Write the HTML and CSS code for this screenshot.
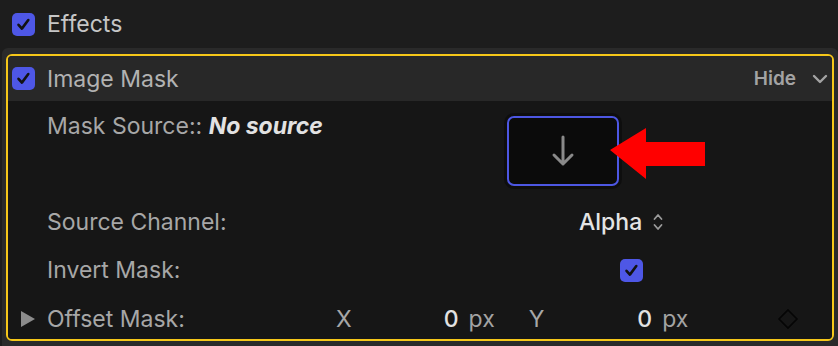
FILE: index.html
```html
<!DOCTYPE html>
<html lang="en">
<head>
  <meta charset="UTF-8" />
  <title>Effects - Image Mask</title>
  <link rel="stylesheet" href="styles.css">
</head>
<body>
  <div class="effects-row">
    <span class="check">
      <svg viewBox="0 0 23 23" width="23" height="23"><path d="M6.5 11.8l3.4 3.8 6.4-8.6" fill="none" stroke="#121212" stroke-width="2.6" stroke-linecap="round" stroke-linejoin="round"/></svg>
    </span>
    <span class="effects-title">Effects</span>
  </div>

  <div class="frame">
    <div class="mask">
      <div class="mask-head">
        <span class="check">
          <svg viewBox="0 0 23 23" width="23" height="23"><path d="M6.5 11.8l3.4 3.8 6.4-8.6" fill="none" stroke="#121212" stroke-width="2.6" stroke-linecap="round" stroke-linejoin="round"/></svg>
        </span>
        <span class="head-title">Image Mask</span>
        <span class="hide">Hide</span>
        <svg class="chevron" viewBox="0 0 16 10" width="16" height="10"><path d="M2 2l6 6 6-6" fill="none" stroke="#a3a3a3" stroke-width="2.4" stroke-linecap="round" stroke-linejoin="round"/></svg>
      </div>

      <div class="mask-body">
        <div class="row row-source">
          <span class="label">Mask Source:: <em class="none">No source</em></span>
          <div class="well">
            <svg viewBox="0 0 28 34" width="28" height="34"><path d="M14 3v27M5 21l9 9 9-9" fill="none" stroke="#8a8a8a" stroke-width="3" stroke-linecap="round" stroke-linejoin="round"/></svg>
          </div>
          <svg class="pointer" viewBox="0 0 96 52" width="96" height="52"><polygon points="0,22 36,0 36,14 95,14 95,38 36,38 36,51" fill="#ff0000"/></svg>
        </div>

        <div class="row">
          <span class="label">Source Channel:</span>
          <span class="popup">Alpha
            <svg viewBox="0 0 12 20" width="12" height="20"><path d="M2.5 7l3.5-4 3.5 4M2.5 13l3.5 4 3.5-4" fill="none" stroke="#9a9a9a" stroke-width="1.8" stroke-linecap="round" stroke-linejoin="round"/></svg>
          </span>
        </div>

        <div class="row">
          <span class="label">Invert Mask:</span>
          <span class="check check-invert">
            <svg viewBox="0 0 23 23" width="23" height="23"><path d="M6.5 11.8l3.4 3.8 6.4-8.6" fill="none" stroke="#121212" stroke-width="2.6" stroke-linecap="round" stroke-linejoin="round"/></svg>
          </span>
        </div>

        <div class="row row-offset">
          <svg class="disclose" viewBox="0 0 16 18" width="16" height="18"><polygon points="1,1 15,9 1,17" fill="#8c8c8c"/></svg>
          <span class="label">Offset Mask:</span>
          <span class="axis axis-x">X</span>
          <span class="num num-x">0</span>
          <span class="unit">px</span>
          <span class="axis axis-y">Y</span>
          <span class="num num-y">0</span>
          <span class="unit">px</span>
          <svg class="keyframe" viewBox="0 0 22 22" width="22" height="22"><path d="M11 2l9 9-9 9-9-9z" fill="none" stroke="#050505" stroke-width="1.6"/></svg>
        </div>
      </div>
    </div>
  </div>
</body>
</html>
```

FILE: styles.css
```css
* {
  box-sizing: border-box;
}

body {
  margin: 0;
  width: 838px;
  height: 346px;
  overflow: hidden;
  background: #1d1d1d;
  font-family: 'Inter', 'Liberation Sans', sans-serif;
  font-size: 23px;
  color: #a7a7a7;
}

.check {
  display: inline-flex;
  width: 23px;
  height: 23px;
  border-radius: 5px;
  background: #4e57e6;
  flex: none;
}

.effects-row {
  height: 48px;
  display: flex;
  align-items: center;
  padding-left: 12px;
}

.effects-title {
  margin-left: 12px;
  color: #c6c6c6;
}

.frame {
  margin-left: 2px;
  background: #2a2a2a;
  border-radius: 6px 6px 0 0;
  padding: 6px 4px 5px 4px;
}

.mask {
  border: 2px solid #f6c719;
  border-radius: 6px;
  overflow: hidden;
  height: 287px;
  display: flex;
  flex-direction: column;
}

.mask-head {
  height: 45px;
  background: #282828;
  display: flex;
  align-items: center;
  padding-left: 4px;
}

.head-title {
  margin-left: 12px;
  color: #b2b2b2;
}

.hide {
  margin-left: auto;
  font-size: 19px;
  font-weight: 600;
  color: #a3a3a3;
}

.chevron {
  margin: 1px 4px 0 16px;
}

.mask-body {
  flex: 1;
  background: #161616;
}

.row {
  height: 48px;
  display: flex;
  align-items: center;
  padding-left: 39px;
}

.row-source {
  position: relative;
  height: 97px;
  align-items: flex-start;
}

.row-source .label {
  margin-top: 11px;
}

.label {
  width: 460px;
  flex: none;
}

.none {
  font-weight: 700;
  font-style: italic;
  color: #e2e2e2;
}

.well {
  margin-top: 15px;
  width: 112px;
  height: 70px;
  border: 2px solid #4d57e3;
  border-radius: 7px;
  background: #0b0b0b;
  box-shadow: 0 0 0 3px #0e0e0e;
  display: flex;
  align-items: center;
  justify-content: center;
}

.pointer {
  position: absolute;
  left: 602px;
  top: 27px;
}

.popup {
  margin-left: 72px;
  display: inline-flex;
  align-items: center;
  gap: 10px;
  font-weight: 500;
  color: #e4e4e4;
}

.check-invert {
  margin-left: 113px;
}

.row-offset {
  height: 45px;
  padding: 4px 0 0 12px;
}

.disclose {
  margin-right: 11px;
}

.row-offset .label {
  width: 289px;
}

.axis {
  color: #a7a7a7;
}

.num {
  color: #e2e2e2;
  font-weight: 500;
}

.num-x {
  margin-left: 92px;
}

.num-y {
  margin-left: 93px;
}

.unit {
  margin-left: 10px;
  color: #a3a3a3;
}

.axis-y {
  margin-left: 34px;
}

.keyframe {
  margin-left: 89px;
}
```
